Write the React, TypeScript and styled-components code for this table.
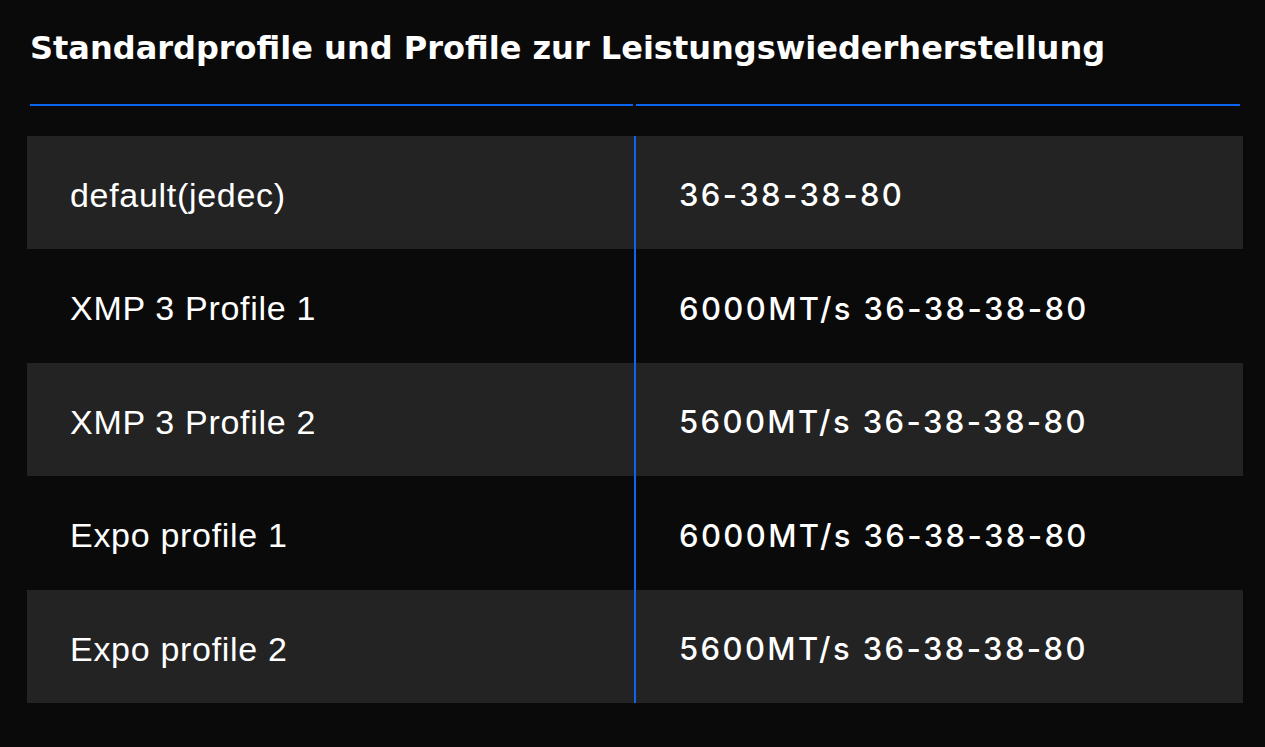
import React from "react";
import styled, { createGlobalStyle } from "styled-components";

const GlobalStyle = createGlobalStyle`
  body {
    margin: 0;
    background: #0a0a0a;
    font-family: "Liberation Sans", Arial, sans-serif;
  }
`;

const Page = styled.div`
  width: 1265px;
  height: 747px;
  background: #0a0a0a;
  padding: 0 22px 0 27px;
  box-sizing: border-box;
`;

const Title = styled.h2`
  margin: 0;
  padding: 28px 0 0 3px;
  height: 104px;
  box-sizing: border-box;
  font-family: "DejaVu Sans", "Liberation Sans", sans-serif;
  font-weight: 700;
  font-size: 32px;
  line-height: 40px;
  color: #ffffff;
  white-space: nowrap;
`;

const HeadRow = styled.div`
  display: grid;
  grid-template-columns: 603px 604px;
  gap: 3px;
  padding-left: 3px;
`;

const HeadCell = styled.div`
  height: 2px;
  background: #0a66f0;
`;

const Table = styled.div`
  margin-top: 30px;
  display: flex;
  flex-direction: column;
`;

const Row = styled.div<{ $striped: boolean }>`
  display: grid;
  grid-template-columns: 607px 2px 607px;
  height: ${(p) => (p.$striped ? "113px" : "114px")};
  background: ${(p) => (p.$striped ? "#232323" : "#0a0a0a")};
`;

const Divider = styled.div`
  background: #0a66f0;
`;

const NameCell = styled.div`
  display: flex;
  align-items: center;
  padding: 5px 0 0 43px;
  font-family: "Liberation Sans", Arial, sans-serif;
  font-size: 34px;
  letter-spacing: 0.7px;
  color: #ffffff;
`;

const ValueCell = styled.div`
  display: flex;
  align-items: center;
  padding: 4px 0 0 43px;
  font-family: Inter, "Liberation Sans", sans-serif;
  font-weight: 500;
  font-size: 31px;
  letter-spacing: 2.4px;
  color: #ffffff;
`;

const rows = [
  { name: "default(jedec)", value: "36-38-38-80" },
  { name: "XMP 3 Profile 1", value: "6000MT/s 36-38-38-80" },
  { name: "XMP 3 Profile 2", value: "5600MT/s 36-38-38-80" },
  { name: "Expo profile 1", value: "6000MT/s 36-38-38-80" },
  { name: "Expo profile 2", value: "5600MT/s 36-38-38-80" },
];

export default function App() {
  return (
    <Page>
      <GlobalStyle />
      <Title>Standardprofile und Profile zur Leistungswiederherstellung</Title>
      <HeadRow>
        <HeadCell />
        <HeadCell />
      </HeadRow>
      <Table>
        {rows.map((r, i) => (
          <Row key={r.name} $striped={i % 2 === 0}>
            <NameCell>{r.name}</NameCell>
            <Divider />
            <ValueCell>{r.value}</ValueCell>
          </Row>
        ))}
      </Table>
    </Page>
  );
}
